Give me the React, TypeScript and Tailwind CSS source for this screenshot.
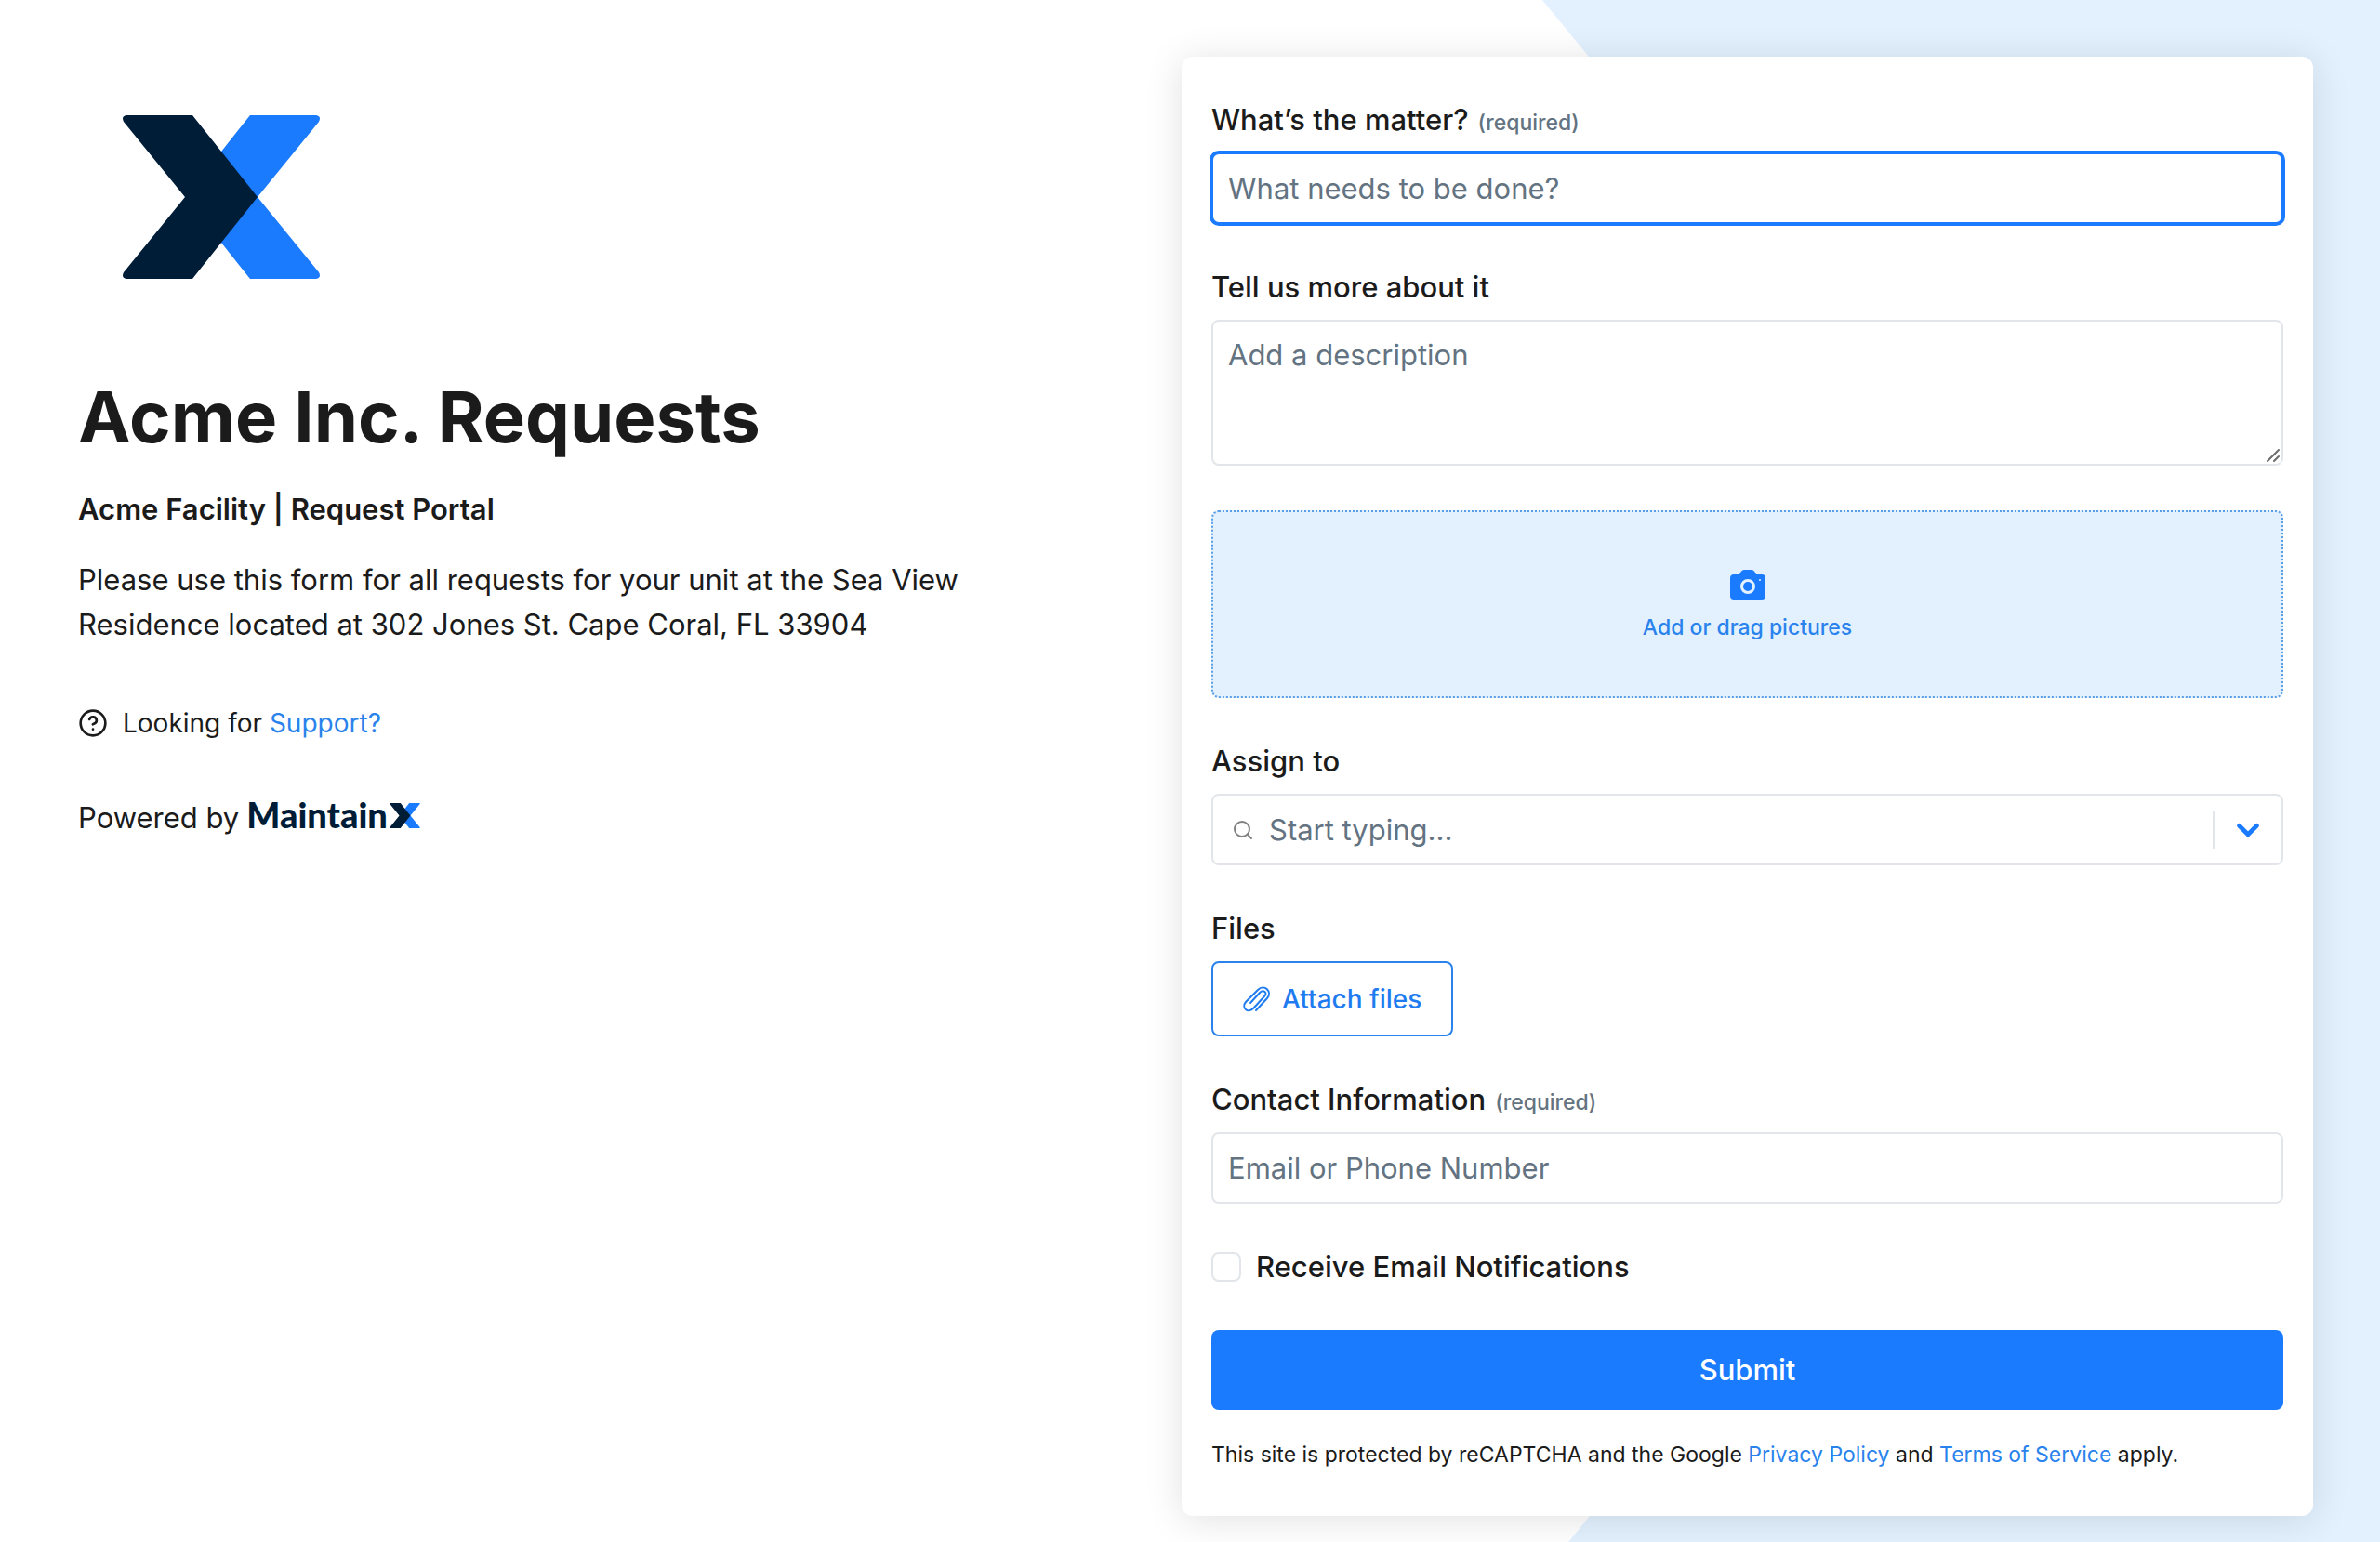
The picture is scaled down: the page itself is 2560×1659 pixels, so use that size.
import type { ReactNode } from "react";
import { ChevronDown, CircleHelp, Search } from "lucide-react";

const field =
  "w-full rounded-lg border-2 bg-white px-4 text-[31px] leading-10 text-[#1b1b1b] placeholder:text-[#637381] placeholder:opacity-100 focus:outline-none";

function Label({ htmlFor, required, children }: { htmlFor: string; required?: boolean; children: ReactNode }) {
  return (
    <label htmlFor={htmlFor} className="mb-[15px] flex items-baseline gap-2.5 text-[31px] leading-10 font-medium">
      {children}
      {required && <span className="text-[23px] leading-8 font-medium text-[#637381]">(required)</span>}
    </label>
  );
}

function XMark({ className }: { className: string }) {
  return (
    <svg viewBox="0 0 212 176" className={className} aria-hidden="true">
      <path d="M137 0H208Q214 1 211 7L145 88L211 169Q214 175 208 176H137L106 137L80 88L106 39Z" fill="#1a7bff" />
      <path d="M4 0H75L145 88L75 176H4Q-2 175 1 169L67 88L1 7Q-2 1 4 0Z" fill="#001d38" />
    </svg>
  );
}

function Camera() {
  return (
    <svg viewBox="0 0 38 32" className="h-8 w-[38px]" aria-hidden="true">
      <path
        fillRule="evenodd"
        fill="#1a7bff"
        d="M4 5H10L12 1.500Q13 0 15 0H23Q25 0 26 1.500L28 5H34Q38 5 38 9V28Q38 32 34 32H4Q0 32 0 28V9Q0 5 4 5ZM19 10A8 8 0 1 0 19 26A8 8 0 1 0 19 10ZM19 13A5 5 0 1 1 19 23A5 5 0 1 1 19 13ZM32 10A1 1 0 1 0 32 12A1 1 0 1 0 32 10Z"
      />
    </svg>
  );
}

function PaperClip() {
  return (
    <svg
      viewBox="0 0 30 28"
      className="h-7 w-[30px]"
      fill="none"
      stroke="#1f7cf0"
      strokeWidth="2"
      strokeLinecap="round"
      aria-hidden="true"
    >
      <path d="M14 26L26 13C32 6 23 -3 16 4L3 17C-2 23 5 30 11 24L23 11C27 7 22 3 18 7L8 18" />
    </svg>
  );
}

export default function App() {
  return (
    <div className="relative isolate min-h-screen bg-white font-[Inter,'Liberation_Sans',sans-serif] text-[#1b1b1b]">
      <div
        aria-hidden="true"
        className="absolute inset-0 -z-10 bg-[#e3f1ff] [clip-path:polygon(64.8%_0,100%_0,100%_100%,65.9%_100%,92%_51%)]"
      />
      <div className="grid grid-cols-[1187fr_1217fr] items-start pt-[61px] pr-[72px] pb-7 pl-[84px]">
        <section className="pt-[63px] pr-40">
          <XMark className="ml-12 h-44 w-[212px]" />
          <h1 className="mt-[100px] text-[76px] leading-[96px] font-bold">Acme Inc. Requests</h1>
          <h2 className="mt-7 text-[31px] leading-12 font-semibold">Acme Facility | Request Portal</h2>
          <p className="mt-7 max-w-[960px] text-[31px] leading-12">
            Please use this form for all requests for your unit at the Sea View Residence located at 302 Jones St. Cape
            Coral, FL 33904
          </p>
          <p className="mt-[62px] flex items-center text-[28px] leading-10">
            <CircleHelp size={32} strokeWidth={2} className="mr-4" aria-hidden="true" />
            <span>
              Looking for{" "}
              <a href="#support" className="text-[#2a83ec]">
                Support?
              </a>
            </span>
          </p>
          <p className="mt-[54px] flex items-baseline text-[31px] leading-12">
            Powered by
            <span className="ml-2 flex items-baseline gap-[2px] font-[Lato,sans-serif] text-[38px] leading-12 font-black text-[#001d38]">
              Maintain
              <XMark className="h-[27px] w-[33px]" />
            </span>
          </p>
        </section>

        <form className="rounded-xl bg-white px-8 pt-12 pb-[50px] shadow-[0_4px_40px_rgba(0,0,0,0.12)]">
          <div>
            <Label htmlFor="title" required>
              What’s the matter?
            </Label>
            <input
              id="title"
              type="text"
              placeholder="What needs to be done?"
              className={`${field} block h-[77px] border-[#1a7bff] ring-2 ring-[#1a7bff]`}
            />
          </div>

          <div className="mt-12">
            <Label htmlFor="description">Tell us more about it</Label>
            <div className="relative">
              <textarea
                id="description"
                placeholder="Add a description"
                className={`${field} block h-[157px] resize-y border-[#e2e5e9] py-4`}
              />
              <svg
                viewBox="0 0 16 16"
                className="pointer-events-none absolute right-[3px] bottom-[3px] size-4 bg-white"
                stroke="#6b6b6b"
                strokeWidth="2"
                strokeLinecap="round"
                aria-hidden="true"
              >
                <path d="M2 14L14 2M9 14L14 9" />
              </svg>
            </div>
          </div>

          <button
            type="button"
            className="mt-12 flex h-[202px] w-full flex-col items-center justify-center gap-3.5 rounded-lg border-2 border-dotted border-[#5a9fe6] bg-[#e3f1ff] pt-1 text-[23px] leading-8 font-medium text-[#2a83ec]"
          >
            <Camera />
            Add or drag pictures
          </button>

          <div className="mt-12">
            <Label htmlFor="assign">Assign to</Label>
            <div className="flex h-[77px] items-center rounded-lg border-2 border-[#e2e5e9] bg-white pl-5">
              <Search size={24} strokeWidth={2} className="text-[#808080]" aria-hidden="true" />
              <input
                id="assign"
                type="text"
                placeholder="Start typing..."
                className="min-w-0 flex-1 px-4 text-[31px] leading-10 placeholder:text-[#637381] placeholder:opacity-100 focus:outline-none"
              />
              <button
                type="button"
                aria-label="Show assignees"
                className="flex h-10 w-[74px] items-center justify-center border-l-2 border-[#e2e5e9] text-[#1a7bff]"
              >
                <ChevronDown size={38} strokeWidth={3} />
              </button>
            </div>
          </div>

          <div className="mt-12">
            <Label htmlFor="files">Files</Label>
            <button
              id="files"
              type="button"
              className="flex h-[81px] items-center gap-3 rounded-lg border-2 border-[#2a83ec] px-8 text-[28px] leading-10 font-medium text-[#1f7cf0]"
            >
              <PaperClip />
              Attach files
            </button>
          </div>

          <div className="mt-12">
            <Label htmlFor="contact" required>
              Contact Information
            </Label>
            <input
              id="contact"
              type="text"
              placeholder="Email or Phone Number"
              className={`${field} block h-[77px] border-[#e2e5e9]`}
            />
          </div>

          <label className="mt-12 flex items-center gap-4 text-[31px] leading-10 font-medium">
            <input
              type="checkbox"
              className="size-8 appearance-none rounded-lg border-2 border-[#e2e5e9] bg-white checked:bg-[#1a7bff]"
            />
            Receive Email Notifications
          </label>

          <button
            type="submit"
            className="mt-12 block h-[86px] w-full rounded-lg bg-[#1a7bff] text-[31px] leading-10 font-medium text-white"
          >
            Submit
          </button>

          <p className="mt-8 text-[23px] leading-8">
            This site is protected by reCAPTCHA and the Google{" "}
            <a href="#privacy" className="text-[#2a83ec]">
              Privacy Policy
            </a>{" "}
            and{" "}
            <a href="#terms" className="text-[#2a83ec]">
              Terms of Service
            </a>{" "}
            apply.
          </p>
        </form>
      </div>
    </div>
  );
}
